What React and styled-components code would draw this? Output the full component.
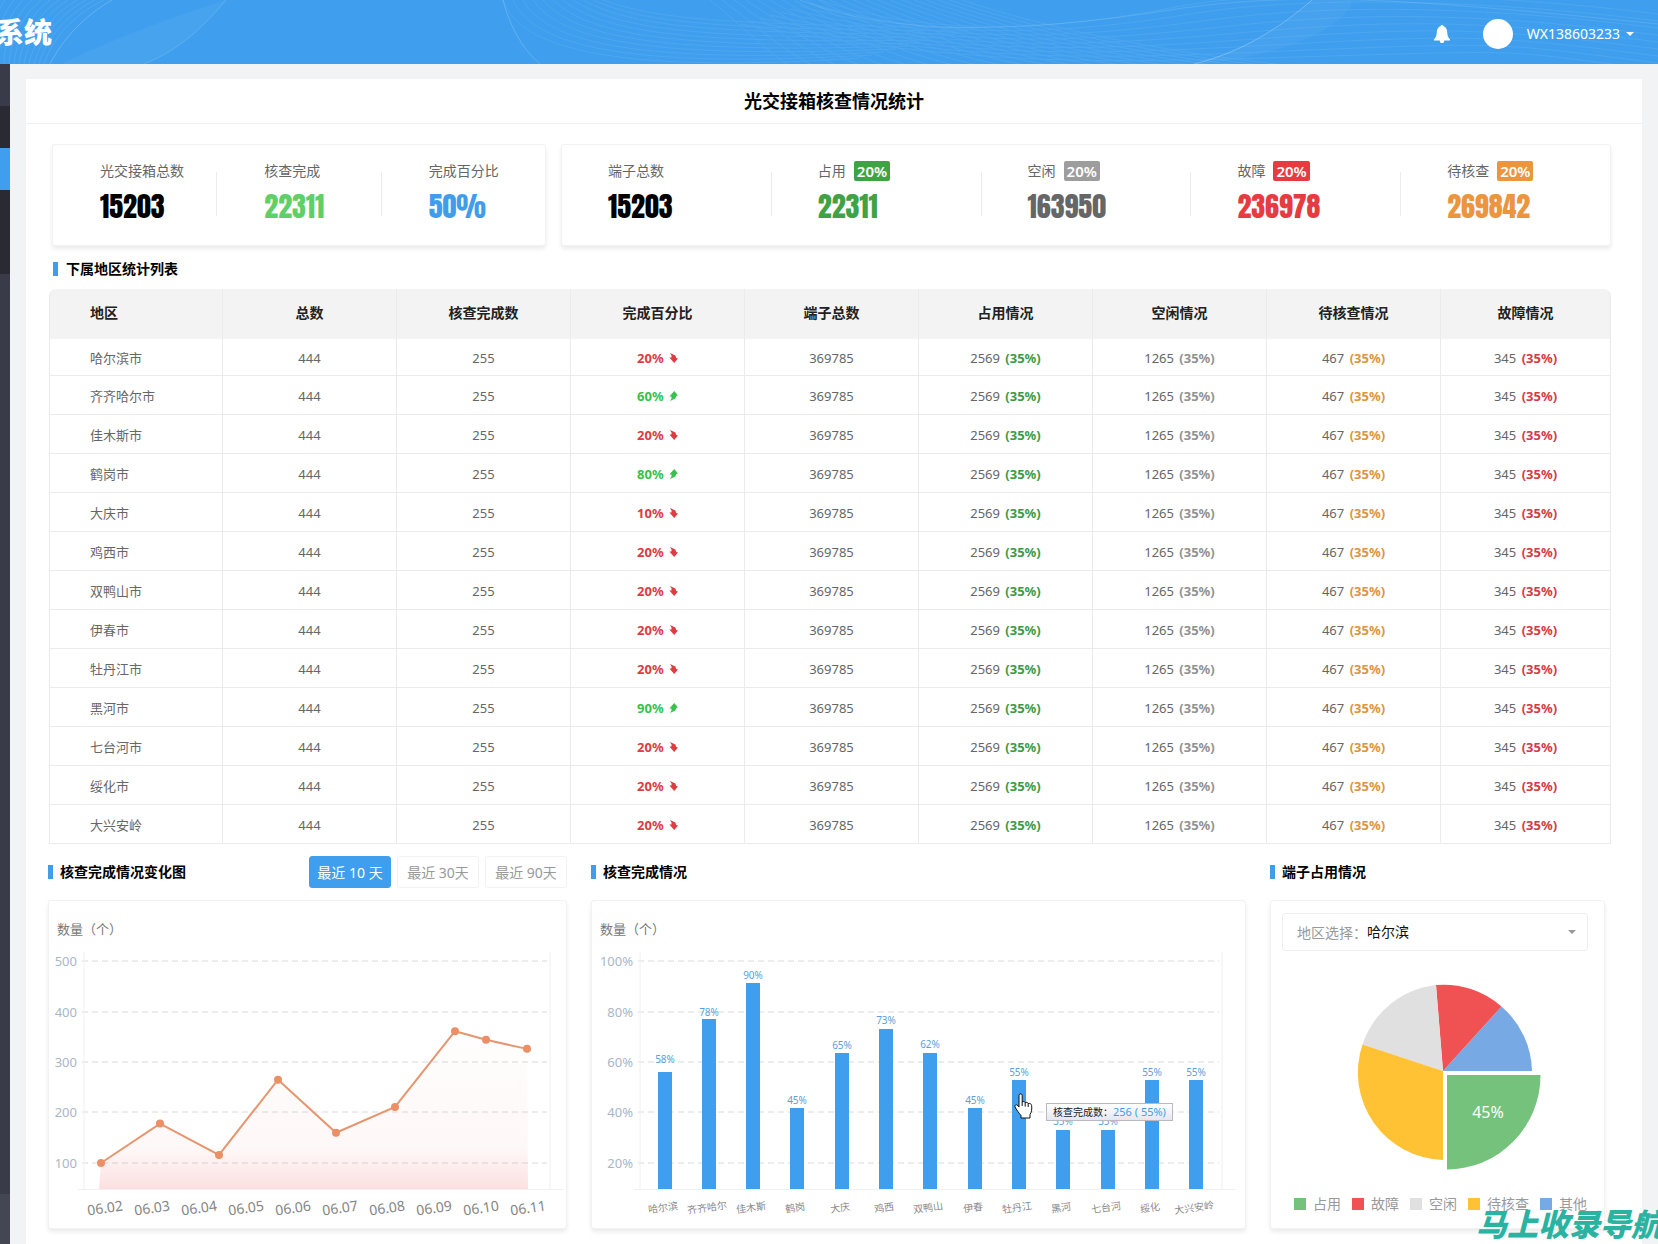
import React, { useState } from 'react';
import styled, { createGlobalStyle } from 'styled-components';

const summary = [
	{ label: '光交接箱总数', value: '15203', color: '#000' },
	{ label: '核查完成', value: '22311', color: '#5fd068' },
	{ label: '完成百分比', value: '50%', color: '#419dea' },
];

const terminals = [
	{ label: '端子总数', value: '15203', color: '#000' },
	{ label: '占用', value: '22311', color: '#3fa346', badge: '20%', badgeColor: '#3fa346' },
	{ label: '空闲', value: '163950', color: '#666', badge: '20%', badgeColor: '#9d9d9d' },
	{ label: '故障', value: '236978', color: '#e63c41', badge: '20%', badgeColor: '#e63c41' },
	{ label: '待核查', value: '269842', color: '#eb953f', badge: '20%', badgeColor: '#eb953f' },
];

const headings = [
	'地区',
	'总数',
	'核查完成数',
	'完成百分比',
	'端子总数',
	'占用情况',
	'空闲情况',
	'待核查情况',
	'故障情况',
];

const regions = [
	{ name: '哈尔滨市', percent: 20, up: false },
	{ name: '齐齐哈尔市', percent: 60, up: true },
	{ name: '佳木斯市', percent: 20, up: false },
	{ name: '鹤岗市', percent: 80, up: true },
	{ name: '大庆市', percent: 10, up: false },
	{ name: '鸡西市', percent: 20, up: false },
	{ name: '双鸭山市', percent: 20, up: false },
	{ name: '伊春市', percent: 20, up: false },
	{ name: '牡丹江市', percent: 20, up: false },
	{ name: '黑河市', percent: 90, up: true },
	{ name: '七台河市', percent: 20, up: false },
	{ name: '绥化市', percent: 20, up: false },
	{ name: '大兴安岭', percent: 20, up: false },
];

const ranges = ['最近 10 天', '最近 30天', '最近 90天'];

const trend = [
	{ x: 53, value: 100 },
	{ x: 112, value: 178 },
	{ x: 171, value: 116 },
	{ x: 230, value: 265 },
	{ x: 288, value: 160 },
	{ x: 347, value: 211 },
	{ x: 407, value: 361 },
	{ x: 438, value: 344 },
	{ x: 479, value: 326 },
];

const days = ['06.02', '06.03', '06.04', '06.05', '06.06', '06.07', '06.08', '06.09', '06.10', '06.11'];

const bars = [
	{ name: '哈尔滨', label: '58%', top: 132, labelY: 119 },
	{ name: '齐齐哈尔', label: '78%', top: 79, labelY: 72 },
	{ name: '佳木斯', label: '90%', top: 43, labelY: 35 },
	{ name: '鹤岗', label: '45%', top: 168, labelY: 160 },
	{ name: '大庆', label: '65%', top: 113, labelY: 105 },
	{ name: '鸡西', label: '73%', top: 89, labelY: 80 },
	{ name: '双鸭山', label: '62%', top: 113, labelY: 104 },
	{ name: '伊春', label: '45%', top: 168, labelY: 160 },
	{ name: '牡丹江', label: '55%', top: 140, labelY: 132 },
	{ name: '黑河', label: '35%', top: 190, labelY: 181 },
	{ name: '七台河', label: '35%', top: 190, labelY: 181 },
	{ name: '绥化', label: '55%', top: 140, labelY: 132 },
	{ name: '大兴安岭', label: '55%', top: 140, labelY: 132 },
];

const legend = [
	{ label: '占用', color: '#75c27c' },
	{ label: '故障', color: '#f05153' },
	{ label: '空闲', color: '#e0e0e0' },
	{ label: '待核查', color: '#ffc235' },
	{ label: '其他', color: '#77a9e4' },
];

const gridLines = [21, 72, 122, 172, 223];

const range = (count) => Array.from({ length: count }, (_, i) => i);

const Waves = () => (
	<WavesStyled viewBox='0 0 1658 64' preserveAspectRatio='none' aria-hidden='true'>
		<path d='M62 64 C110 40 170 18 226 0 C205 25 180 50 144 64 Z' fill='#fff' opacity='0.05' />
		<path d='M226 0 C205 25 180 50 144 64' stroke='#fff' opacity='0.14' />
		<path d='M50 64 C62 40 85 15 112 0' stroke='#fff' opacity='0.2' />
		<g stroke='#fff' opacity='0.09'>
			{range(12).map((i) => (
				<path key={i} d={`M${44 - i * 5} 64 C${52 - i * 6} 40 ${72 - i * 7} 15 ${104 - i * 9} 0`} />
			))}
		</g>
		<g stroke='#fff' opacity='0.07'>
			{range(11).map((i) => (
				<path
					key={i}
					d={`M${503 + i * 10} 0 C${520 + i * 14} ${50 - i * 3} ${620 + i * 10} ${74 - i * 5} ${860 + i * 12} ${58 - i * 3}`}
				/>
			))}
			{range(22).map((i) => (
				<path key={i} d={`M${710 + i * 12} 0 C${740 + i * 14} 24 ${765 + i * 18} 50 ${790 + i * 24} 66`} />
			))}
			{range(9).map((i) => (
				<path
					key={i}
					d={`M${820 - i * 10} ${i * 3} C${930 + i * 8} ${38 + i * 4} ${1060 + i * 8} ${30 + i * 4} ${1170 + i * 20} ${8 + i * 6} S1500 ${-6 + i * 7} 1658 ${14 + i * 7}`}
				/>
			))}
		</g>
		<path d='M503 0 C508 20 520 48 540 64' stroke='#fff' opacity='0.18' />
		<path d='M800 0 C900 40 1040 30 1170 10 S1420 0 1658 24' stroke='#fff' opacity='0.12' />
		<path d='M1194 64 C1245 50 1285 25 1312 0 L1352 0 C1350 20 1300 55 1194 64 Z' fill='#fff' opacity='0.04' />
		<path d='M1194 64 C1240 53 1280 28 1312 0' stroke='#fff' opacity='0.25' />
	</WavesStyled>
);

const Bell = () => (
	<svg width='18' height='20' viewBox='0 0 18 20' fill='#fff' aria-hidden='true'>
		<path d='M9 1 C9.9 1 10.4 1.6 10.5 2.3 C13 3.1 14 5.3 14.2 8 C14.4 11.5 15 13.6 17 15.2 V16.6 H1 V15.2 C3 13.6 3.6 11.5 3.8 8 C4 5.3 5 3.1 7.5 2.3 C7.6 1.6 8.1 1 9 1 Z' />
		<path d='M6.8 16 H11.2 V17.2 C11 18.5 10.2 19 9 19 S7 18.5 6.8 17.2 Z' />
	</svg>
);

const Caret = ({ color }) => (
	<svg width='8' height='4' viewBox='0 0 8 4' fill={color} aria-hidden='true'>
		<path d='M0 0 H8 L4 4 Z' />
	</svg>
);

const TrendArrow = ({ up }) => (
	<svg width='9' height='10' viewBox='0 0 9 10' fill='currentColor' aria-hidden='true'>
		{up ? (
			<path d='M5.2 0 L9 4.4 L7.2 5 L6.4 7.6 L1 10 L2.6 7.2 L2.4 5.6 L0.4 5.4 Z' />
		) : (
			<path d='M5.2 10 L9 5.6 L7.2 5 L6.4 2.4 L1 0 L2.6 2.8 L2.4 4.4 L0.4 4.6 Z' />
		)}
	</svg>
);

const StatCard = ({ items, indent }) => (
	<StatCardStyled>
		{items.map(({ label, value, color, badge, badgeColor }, index) => (
			<React.Fragment key={label}>
				{index > 0 && <Divider />}
				<Stat $indent={indent}>
					<StatLabel>
						{label}
						{badge && <Badge $color={badgeColor}>{badge}</Badge>}
					</StatLabel>
					<StatValue $color={color}>{value}</StatValue>
				</Stat>
			</React.Fragment>
		))}
	</StatCardStyled>
);

const RegionTable = () => (
	<TableStyled>
		<thead>
			<tr>
				{headings.map((heading) => (
					<th key={heading}>{heading}</th>
				))}
			</tr>
		</thead>
		<tbody>
			{regions.map(({ name, percent, up }) => (
				<tr key={name}>
					<td>{name}</td>
					<td>444</td>
					<td>255</td>
					<td>
						<Rate $up={up}>
							{percent}% <TrendArrow up={up} />
						</Rate>
					</td>
					<td>369785</td>
					<td>
						2569 <Share $color='#3c9a44'>(35%)</Share>
					</td>
					<td>
						1265 <Share $color='#929292'>(35%)</Share>
					</td>
					<td>
						467 <Share $color='#de9440'>(35%)</Share>
					</td>
					<td>
						345 <Share $color='#d43a48'>(35%)</Share>
					</td>
				</tr>
			))}
		</tbody>
	</TableStyled>
);

const Grid = ({ labels, left, right }) => (
	<g>
		{gridLines.map((y, index) => (
			<g key={y}>
				<line x1={left - 2} x2={right - 3} y1={y} y2={y} stroke='#d9dadd' strokeDasharray='6 4' />
				<text x={left - 7} y={y + 5} textAnchor='end' fontSize='13' fill='#a9b6c6'>
					{labels[index]}
				</text>
			</g>
		))}
		<path d={`M${left} 12 V249 M${right} 12 V249 M${left - 6} 249.5 H${right + 14}`} stroke='#f0f0f2' />
	</g>
);

const TrendChart = () => {
	const points = trend.map(({ x, value }) => [x, 223 - (value - 100) * 0.505]);
	const line = points.map((point) => point.join(' ')).join(' L');

	return (
		<Chart viewBox='1 0 517 288' role='img' aria-label='核查完成情况变化图'>
			<defs>
				<linearGradient id='trendFill' gradientUnits='userSpaceOnUse' x1='0' y1='90' x2='0' y2='249'>
					<stop offset='0' stopColor='#f0646a' stopOpacity='0.01' />
					<stop offset='0.75' stopColor='#f0646a' stopOpacity='0.05' />
					<stop offset='1' stopColor='#f0646a' stopOpacity='0.2' />
				</linearGradient>
			</defs>
			<Grid labels={[500, 400, 300, 200, 100]} left={36} right={502} />
			<path d={`M51 249 L${line} L480 249 Z`} fill='url(#trendFill)' />
			<path d={`M${line}`} fill='none' stroke='#e6966f' strokeWidth='2' />
			{points.map(([x, y]) => (
				<circle key={x} cx={x} cy={y} r='4' fill='#ec8f67' />
			))}
			{days.map((day, index) => {
				const x = 57 + index * 47;
				return (
					<text
						key={day}
						x={x}
						y='273'
						textAnchor='middle'
						fontSize='14'
						fill='#858585'
						transform={`rotate(-8 ${x} 268)`}
					>
						{day}
					</text>
				);
			})}
		</Chart>
	);
};

const BarChart = () => (
	<ChartArea>
		<Chart viewBox='1 0 653 288' role='img' aria-label='核查完成情况'>
			<Grid labels={['100%', '80%', '60%', '40%', '20%']} left={49} right={631} />
			{bars.map(({ name, label, top, labelY }, index) => {
				const x = Math.round(73.5 + index * 44.3);
				return (
					<g key={name}>
						<rect x={x - 7} y={top} width='14' height={249 - top} fill='#3f9fee' />
						<text x={x} y={labelY + 4} textAnchor='middle' fontSize='10' fill='#5a9fdc'>
							{label}
						</text>
						<text
							x={x - 2}
							y='271'
							textAnchor='middle'
							fontSize='10'
							fill='#8a8a8a'
							transform={`rotate(-8 ${x} 267)`}
						>
							{name}
						</text>
					</g>
				);
			})}
			<path
				transform='translate(423 153)'
				d='M6 1 C7.4 0.6 8.2 1.4 8.2 2.6 V9 C9 8.3 10.8 8.4 11.2 9.6 C12.2 9 13.8 9.3 14.2 10.5 C15.6 10.1 17.4 10.6 17.6 12.4 C18 16 17.8 18.6 16 21.5 V25 H7 V22.5 C4.5 19.5 2.5 17 1 13.8 C0.4 12.4 2 11.2 3.2 12 L5 14 V2.4 C5 1.6 5.4 1.1 6 1 Z M8.2 9 V13 M11.2 9.6 V13.6 M14.2 10.5 V14'
				fill='#fff'
				stroke='#111'
			/>
		</Chart>
		<Tooltip>
			核查完成数：<span>256 ( 55%)</span>
		</Tooltip>
	</ChartArea>
);

const PieChart = () => (
	<Chart viewBox='1 -17 333 223' role='img' aria-label='端子占用情况'>
		<path d='M173 103 H262 A87.5 87.5 0 0 0 231.5 38.5 Z' fill='#77a9e4' />
		<path d='M173 103 L231.5 38.5 A87.5 87.5 0 0 0 166 17 Z' fill='#f05153' />
		<path d='M173 103 L166 17 A87.5 87.5 0 0 0 92.5 76.5 Z' fill='#e0e0e0' />
		<path d='M173 103 L92.5 76.5 A87.5 87.5 0 0 0 173 192 Z' fill='#ffc235' />
		<path d='M177 107 H270.5 A94 94 0 0 1 177 201.5 Z' fill='#75c27c' />
		<text x='218' y='150' textAnchor='middle' fontSize='16' fill='#fff'>
			45%
		</text>
	</Chart>
);

const App = () => {
	const [activeRange, setActiveRange] = useState(ranges[0]);

	return (
		<Page>
			<GlobalStyle />
			<Header>
				<Waves />
				<SystemName>系统</SystemName>
				<UserArea>
					<IconButton type='button' aria-label='消息'>
						<Bell />
					</IconButton>
					<Avatar />
					<UserButton type='button'>
						WX138603233
						<Caret color='#fff' />
					</UserButton>
				</UserArea>
			</Header>
			<Body>
				<Sidebar>
					<SideBlock $height={42} />
					<SideBlock $height={42} $color='#2a2a33' />
					<SideBlock $height={42} $color='#3f9fee' />
					<SideBlock $height={84} $color='#2a2a33' />
					<SideBlock $grow />
					<SideBlock $height={51} $color='#434753' />
				</Sidebar>
				<Panel>
					<PageTitle>光交接箱核查情况统计</PageTitle>
					<Stats>
						<StatCard items={summary} indent={47} />
						<StatCard items={terminals} indent={46} />
					</Stats>
					<TableSection>
						<SectionTitle $gap={8}>下属地区统计列表</SectionTitle>
						<RegionTable />
					</TableSection>
					<Charts>
						<section>
							<ChartHead>
								<SectionTitle>核查完成情况变化图</SectionTitle>
								<Ranges>
									{ranges.map((item) => (
										<RangeButton
											key={item}
											type='button'
											$active={item === activeRange}
											onClick={() => setActiveRange(item)}
										>
											{item}
										</RangeButton>
									))}
								</Ranges>
							</ChartHead>
							<Card>
								<AxisTitle>数量（个）</AxisTitle>
								<TrendChart />
							</Card>
						</section>
						<section>
							<ChartHead>
								<SectionTitle>核查完成情况</SectionTitle>
							</ChartHead>
							<Card>
								<AxisTitle>数量（个）</AxisTitle>
								<BarChart />
							</Card>
						</section>
						<section>
							<ChartHead>
								<SectionTitle>端子占用情况</SectionTitle>
							</ChartHead>
							<Card>
								<RegionPicker>
									<label htmlFor='region'>地区选择：</label>
									<select id='region' defaultValue='哈尔滨'>
										{bars.map(({ name }) => (
											<option key={name}>{name}</option>
										))}
									</select>
									<Caret color='#999' />
								</RegionPicker>
								<PieChart />
								<Legend>
									{legend.map(({ label, color }) => (
										<LegendItem key={label} $color={color}>
											{label}
										</LegendItem>
									))}
								</Legend>
							</Card>
						</section>
					</Charts>
				</Panel>
			</Body>
			<Watermark>马上收录导航</Watermark>
		</Page>
	);
};

const GlobalStyle = createGlobalStyle`
	* {
		box-sizing: border-box;
	}
	body {
		margin: 0;
		font-family: 'Noto Sans', 'Noto Sans CJK SC', sans-serif;
		font-size: 14px;
		background: #f1f3f5;
	}
	button, select {
		font: inherit;
	}
`;

const Page = styled.div`
	position: relative;
	display: flex;
	flex-direction: column;
	min-height: 100vh;
	overflow: hidden;
`;

const Header = styled.header`
	position: relative;
	display: flex;
	align-items: center;
	justify-content: space-between;
	height: 64px;
	background: #3f9fee;
	color: #fff;
`;

const WavesStyled = styled.svg`
	position: absolute;
	inset: 0;
	width: 100%;
	height: 100%;
	fill: none;
`;

const SystemName = styled.div`
	position: relative;
	display: flex;
	justify-content: flex-end;
	width: 52px;
	overflow: hidden;
	font-size: 28px;
	font-weight: 900;
	line-height: 40px;
	white-space: nowrap;
`;

const UserArea = styled.div`
	position: relative;
	display: flex;
	align-items: center;
	padding: 3px 24px 0 0;
`;

const IconButton = styled.button`
	display: flex;
	margin-right: 32px;
	padding: 0;
	border: 0;
	background: none;
`;

const Avatar = styled.span`
	width: 30px;
	height: 30px;
	margin-right: 14px;
	border-radius: 50%;
	background: #fff;
`;

const UserButton = styled.button`
	display: flex;
	align-items: center;
	gap: 6px;
	padding: 0;
	border: 0;
	background: none;
	color: #fff;
	font-size: 14px;
`;

const Body = styled.div`
	display: flex;
	flex: 1;
`;

const Sidebar = styled.nav`
	display: flex;
	flex-direction: column;
	width: 10px;
	margin-right: 16px;
`;

const SideBlock = styled.div`
	flex: ${({ $grow }) => ($grow ? '1' : 'none')};
	height: ${({ $height }) => ($height ? `${$height}px` : 'auto')};
	background: ${({ $color }) => $color || '#393c48'};
`;

const Panel = styled.main`
	flex: 1;
	min-width: 0;
	margin: 15px 16px 0 0;
	padding-bottom: 16px;
	background: #fff;
`;

const PageTitle = styled.h1`
	margin: 0;
	border-bottom: 1px solid #eef0f1;
	font-size: 18px;
	line-height: 44px;
	text-align: center;
`;

const Stats = styled.div`
	display: grid;
	grid-template-columns: 494fr 1050fr;
	gap: 15px;
	padding: 20px 31px 0 26px;
`;

const Card = styled.div`
	border: 1px solid #f2f2f2;
	border-radius: 3px;
	background: #fff;
	box-shadow: 0 3px 4px rgba(0, 0, 0, 0.08);
`;

const StatCardStyled = styled(Card)`
	display: flex;
	height: 102px;
	padding-top: 16px;
`;

const Stat = styled.div`
	flex: 1;
	padding-left: ${({ $indent }) => $indent}px;
`;

const Divider = styled.span`
	width: 1px;
	height: 44px;
	margin-top: 11px;
	background: #ececec;
`;

const StatLabel = styled.div`
	display: flex;
	gap: 8px;
	color: #666;
	font-size: 14px;
	line-height: 20px;
	white-space: nowrap;
`;

const Badge = styled.span`
	padding: 0 3px;
	border-radius: 2px;
	background: ${({ $color }) => $color};
	color: #fff;
	font-size: 15px;
	font-weight: 600;
`;

const StatValue = styled.div`
	margin-top: 9px;
	color: ${({ $color }) => $color};
	font-family: Impact, Anton, 'Liberation Sans Narrow', 'Roboto Condensed', 'Open Sans Condensed', 'Liberation Sans', sans-serif;
	font-size: 28px;
	font-weight: 400;
	line-height: 32px;
`;

const SectionTitle = styled.h2`
	display: flex;
	align-items: center;
	gap: ${({ $gap }) => $gap || 7}px;
	margin: 0;
	font-size: 14px;
	line-height: 20px;

	&::before {
		content: '';
		width: 5px;
		height: 14px;
		background: #419dea;
	}
`;

const TableSection = styled.section`
	padding: 13px 31px 0 23px;

	h2 {
		margin: 0 0 10px 4px;
	}
`;

const TableStyled = styled.table`
	width: 100%;
	table-layout: fixed;
	border-collapse: separate;
	border-spacing: 0;
	color: #666;
	font-size: 13px;
	text-align: center;

	th {
		height: 50px;
		padding: 0 0 4px;
		border-right: 1px solid #ebebeb;
		background: #f3f3f3;
		color: #222;
		font-size: 14px;
	}
	td {
		height: 39px;
		padding: 1px 0 0;
		border-right: 1px solid #ebebeb;
		border-bottom: 1px solid #ebebeb;
	}
	tbody tr:first-child td {
		height: 37px;
	}
	th:first-child,
	td:first-child {
		padding-left: 40px;
		border-left: 1px solid #ebebeb;
		text-align: left;
	}
	th:first-child {
		border-top-left-radius: 8px;
	}
	th:last-child {
		width: 170px;
		border-top-right-radius: 8px;
	}
`;

const Rate = styled.b`
	color: ${({ $up }) => ($up ? '#36c24c' : '#dd3c41')};

	svg {
		margin-left: 2px;
	}
`;

const Share = styled.b`
	margin-left: 2px;
	color: ${({ $color }) => $color};
`;

const Charts = styled.div`
	display: grid;
	grid-template-columns: 519fr 655fr 335fr;
	gap: 24px;
	padding: 12px 37px 0 22px;

	section {
		display: flex;
		flex-direction: column;
		min-width: 0;
	}
	${Card} {
		flex: 1;
	}
`;

const ChartHead = styled.div`
	display: flex;
	align-items: center;
	justify-content: space-between;
	height: 32px;
	margin-bottom: 12px;
`;

const Ranges = styled.div`
	display: flex;
	gap: 6px;
`;

const RangeButton = styled.button`
	width: 82px;
	height: 32px;
	padding: 0;
	border: 1px solid ${({ $active }) => ($active ? '#3f9fee' : '#f2f2f2')};
	border-radius: 3px;
	background: ${({ $active }) => ($active ? '#3f9fee' : '#fff')};
	color: ${({ $active }) => ($active ? '#fff' : '#999')};
	font-size: 14px;
`;

const AxisTitle = styled.div`
	padding: 18px 0 1px 8px;
	color: #777;
	font-size: 13px;
	line-height: 20px;
`;

const ChartArea = styled.div`
	position: relative;
`;

const Chart = styled.svg`
	display: block;
	width: 100%;
	height: auto;
`;

const Tooltip = styled.div`
	position: absolute;
	top: 163px;
	left: 454px;
	padding: 0 6px;
	border: 1px solid #b9b9c2;
	background: linear-gradient(#fff, #e6e6f2);
	color: #222;
	font-size: 10px;
	line-height: 15px;
	white-space: nowrap;

	span {
		color: #419dea;
		font-size: 11px;
	}
`;

const RegionPicker = styled.div`
	display: flex;
	align-items: center;
	height: 38px;
	margin: 12px 16px 0 11px;
	padding: 0 11px 1px 14px;
	border: 1px solid #efefef;
	border-radius: 3px;
	color: #999;

	select {
		flex: 1;
		padding: 0;
		border: 0;
		background: none;
		color: #111;
		appearance: none;
	}
`;

const Legend = styled.div`
	display: flex;
	justify-content: center;
	gap: 11px;
	margin-top: 20px;
	padding-left: 6px;
	color: #999;
	line-height: 20px;
`;

const LegendItem = styled.span`
	display: flex;
	align-items: center;
	gap: 7px;

	&::before {
		content: '';
		width: 12px;
		height: 12px;
		background: ${({ $color }) => $color};
	}
`;

const Watermark = styled.div`
	position: absolute;
	right: -4px;
	bottom: 1px;
	color: #2bb3a1;
	font-size: 31px;
	font-style: italic;
	font-weight: 900;
	line-height: 40px;
	white-space: nowrap;
`;

export default App;
